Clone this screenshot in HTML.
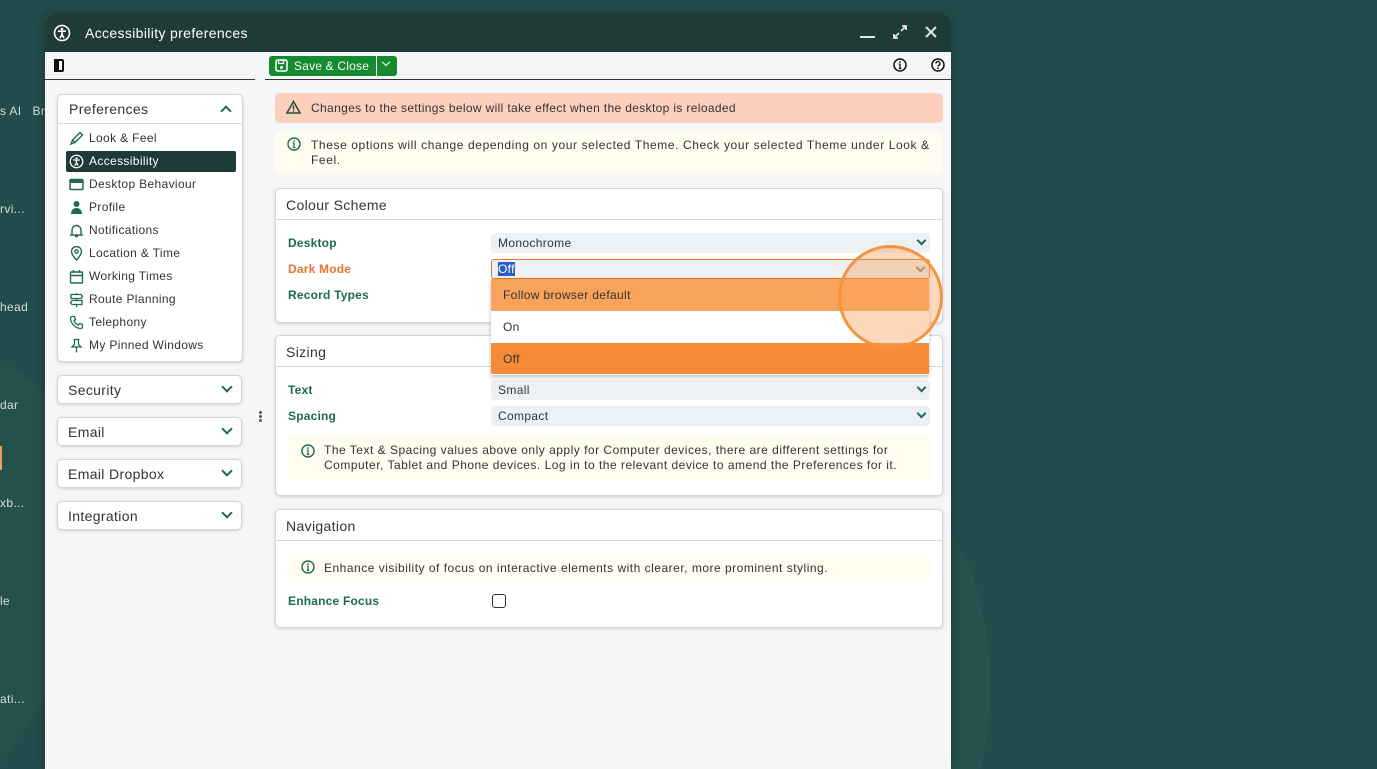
<!DOCTYPE html>
<html><head><meta charset="utf-8"><style>
*{box-sizing:border-box;margin:0;padding:0}
html,body{width:1377px;height:769px;overflow:hidden}
body{background:#224d4c;font-family:"Liberation Sans",sans-serif;position:relative;font-size:12px;color:#333;letter-spacing:.35px}
.a{position:absolute}
.bgt{position:absolute;color:#d6dedc;font-size:12px}
.win{position:absolute;left:45px;top:14px;width:906px;height:755px;background:#f5f6f8;border-radius:8px 8px 0 0;overflow:hidden;box-shadow:0 0 12px rgba(0,0,0,.3)}
.title{position:absolute;left:0;top:0;width:906px;height:38px;background:#1e3b35;color:#fff;font-size:14px}
.card{position:absolute;background:#fff;border:1px solid #d4d7da;border-radius:5px;box-shadow:0 1px 3px rgba(0,0,0,.15)}
.acc{position:absolute;left:12px;width:185px;height:29px;background:#fff;border:1px solid #d4d7da;border-radius:5px;box-shadow:0 1px 3px rgba(0,0,0,.15);font-size:14px;color:#333;padding:6px 10px}
.chev{position:absolute;right:10px;top:9px;width:8px;height:8px;border-right:2px solid #1e6b52;border-bottom:2px solid #1e6b52;transform:rotate(45deg)}
.mi{position:absolute;left:8px;width:170px;height:20px;font-size:12px;color:#333;padding:3px 0 0 23px}
.mi svg{position:absolute;left:3px;top:3px}
.lbl{position:absolute;font-weight:bold;color:#1d6a4f;font-size:12px;letter-spacing:.2px}
.sel{position:absolute;left:215px;width:439px;height:20px;background:#eef1f4;border-radius:3px;padding:3px 7px;font-size:12px;color:#333}
.sel .chev{top:4px;right:5px;width:7px;height:7px}
.ch{font-size:14px;color:#333;position:absolute;left:10px;top:8px}
.hl{position:absolute;left:0;right:0;height:1px;background:#d4d7da}
.info{position:absolute;left:12px;right:12px;background:#fefdf0;border-radius:4px;font-size:12px;color:#333}
</style></head><body>
<div class="a" style="left:0;top:0;width:1377px;height:769px;overflow:hidden">
<div class="a" style="left:-230px;top:360px;width:330px;height:420px;background:#27534f;transform:rotate(35deg);opacity:.7"></div>
<div class="a" style="left:790px;top:490px;width:200px;height:390px;border-radius:50%;background:#26524f"></div>
</div>
<div class="bgt" style="left:0;top:104px">s AI&nbsp;&nbsp;&nbsp;Br</div>
<div class="bgt" style="left:0;top:202px">rvi...</div>
<div class="bgt" style="left:0;top:300px">head</div>
<div class="bgt" style="left:0;top:398px">dar</div>
<div class="a" style="left:0;top:446px;width:2px;height:24px;background:#e8a25a"></div>
<div class="bgt" style="left:0;top:496px">xb...</div>
<div class="bgt" style="left:0;top:594px">le</div>
<div class="bgt" style="left:0;top:692px">ati...</div>

<div class="win">
 <div class="title">
  <svg class="a" style="left:8px;top:10px" width="18" height="18" viewBox="0 0 18 18"><circle cx="9" cy="9" r="7.5" fill="none" stroke="#fff" stroke-width="1.6"/><circle cx="9" cy="5" r="1.3" fill="#fff"/><path d="M5 7.2h8M9 7.5v3M9 10.5l-2 3.5M9 10.5l2 3.5" stroke="#fff" stroke-width="1.6" fill="none"/></svg>
  <div class="a" style="left:40px;top:11px">Accessibility preferences</div>
  <div class="a" style="left:815px;top:22px;width:15px;height:2px;background:#e0e6e4"></div>
  <svg class="a" style="left:846px;top:9px" width="18" height="18" viewBox="0 0 18 18"><path d="M10 8l5-5M11 3h4v4M8 10l-5 5M3 11v4h4" stroke="#e0e6e4" stroke-width="1.8" fill="none"/></svg>
  <svg class="a" style="left:879px;top:11px" width="14" height="14" viewBox="0 0 14 14"><path d="M2 2l10 10M12 2L2 12" stroke="#e0e6e4" stroke-width="2"/></svg>
 </div>
 <div class="a" style="left:9px;top:45px;width:10px;height:13px;border:2px solid #111;border-radius:2px"></div>
 <div class="a" style="left:9px;top:45px;width:5px;height:13px;background:#111"></div>
 <div class="a" style="left:0;top:65px;width:210px;height:1px;background:#333"></div>
 <div class="a" style="left:220px;top:65px;width:686px;height:1px;background:#333"></div>
 <div class="a" style="left:224px;top:42px;width:107px;height:20px;background:#158a2e;border-radius:3px 0 0 3px;color:#fff;font-size:12px;padding:3px 0 0 25px;letter-spacing:.2px">Save &amp; Close</div>
 <svg class="a" style="left:230px;top:45px" width="13" height="13" viewBox="0 0 13 13"><rect x="1" y="1" width="11" height="11" rx="1.5" fill="none" stroke="#fff" stroke-width="1.5"/><rect x="3.5" y="1" width="5" height="3.5" fill="none" stroke="#fff" stroke-width="1.2"/><circle cx="6.5" cy="8.5" r="1.5" fill="#fff"/></svg>
 <div class="a" style="left:332px;top:42px;width:20px;height:20px;background:#158a2e;border-radius:0 3px 3px 0"></div>
 <div class="a" style="left:338px;top:45px;width:6px;height:6px;border-right:1.5px solid #fff;border-bottom:1.5px solid #fff;transform:rotate(45deg)"></div>
 <svg class="a" style="left:848px;top:44px" width="14" height="14" viewBox="0 0 14 14"><circle cx="7" cy="7" r="6" fill="none" stroke="#111" stroke-width="1.5"/><path d="M7 6v4.5M5.8 6h1.2M5.8 10.5h2.6" stroke="#111" stroke-width="1.3"/><circle cx="7" cy="4" r=".9" fill="#111"/></svg>
 <svg class="a" style="left:886px;top:44px" width="14" height="14" viewBox="0 0 14 14"><circle cx="7" cy="7" r="6" fill="none" stroke="#111" stroke-width="1.5"/><path d="M5 5.5a2 2 0 1 1 2.6 1.9c-.5.2-.6.5-.6 1.2" stroke="#111" stroke-width="1.3" fill="none"/><circle cx="7" cy="10.3" r=".9" fill="#111"/></svg>

 <div class="card" style="left:12px;top:80px;width:186px;height:268px">
  <div class="ch" style="top:6px;left:11px">Preferences</div>
  <div class="a" style="right:12px;top:12px;width:8px;height:8px;border-left:2px solid #1e6b52;border-top:2px solid #1e6b52;transform:rotate(45deg)"></div>
  <div class="hl" style="top:28px"></div>
  <div class="mi" style="top:33px"><svg width="15" height="15" viewBox="0 0 15 15"><path d="M2 13l1.5-4L11 1.5l2.5 2.5L6 11.5z M3.5 9l2.5 2.5" fill="none" stroke="#1e6b52" stroke-width="1.4"/></svg>Look &amp; Feel</div>
  <div class="mi" style="top:56px;background:#1e3b35;color:#fff;border-radius:2px;height:21px"><svg width="15" height="15" viewBox="0 0 18 18"><circle cx="9" cy="9" r="7.5" fill="none" stroke="#fff" stroke-width="1.6"/><circle cx="9" cy="5" r="1.3" fill="#fff"/><path d="M5 7.2h8M9 7.5v3M9 10.5l-2 3.5M9 10.5l2 3.5" stroke="#fff" stroke-width="1.6" fill="none"/></svg>Accessibility</div>
  <div class="mi" style="top:79px"><svg width="15" height="15" viewBox="0 0 15 15"><rect x="1" y="2.5" width="13" height="10" rx="1" fill="none" stroke="#1e6b52" stroke-width="1.5"/><rect x="1" y="2.5" width="13" height="3.5" fill="#1e6b52"/></svg>Desktop Behaviour</div>
  <div class="mi" style="top:102px"><svg width="15" height="15" viewBox="0 0 15 15"><circle cx="7.5" cy="4" r="3" fill="#1e6b52"/><path d="M2 14c0-4 2.5-6 5.5-6s5.5 2 5.5 6z" fill="#1e6b52"/></svg>Profile</div>
  <div class="mi" style="top:125px"><svg width="15" height="15" viewBox="0 0 15 15"><path d="M3 11V7a4.5 4.5 0 0 1 9 0v4l1 1H2zM6 13.5h3" fill="none" stroke="#1e6b52" stroke-width="1.4"/></svg>Notifications</div>
  <div class="mi" style="top:148px"><svg width="15" height="15" viewBox="0 0 15 15"><path d="M7.5 14s-5-5-5-8.5a5 5 0 0 1 10 0C12.5 9 7.5 14 7.5 14z" fill="none" stroke="#1e6b52" stroke-width="1.4"/><circle cx="7.5" cy="5.5" r="1.7" fill="none" stroke="#1e6b52" stroke-width="1.3"/></svg>Location &amp; Time</div>
  <div class="mi" style="top:171px"><svg width="15" height="15" viewBox="0 0 15 15"><rect x="1.5" y="3" width="12" height="11" rx="1" fill="none" stroke="#1e6b52" stroke-width="1.4"/><path d="M1.5 6.5h12M4.5 1v3M10.5 1v3" stroke="#1e6b52" stroke-width="1.4"/></svg>Working Times</div>
  <div class="mi" style="top:194px"><svg width="15" height="15" viewBox="0 0 15 15"><path d="M2 2.5h10l1.5 2-1.5 2H2zM3 8.5h10v4H3l-1.5-2zM7.5 1v1.5M7.5 6.5v2M7.5 12.5V15" fill="none" stroke="#1e6b52" stroke-width="1.3"/></svg>Route Planning</div>
  <div class="mi" style="top:217px"><svg width="15" height="15" viewBox="0 0 15 15"><path d="M3 1.5l2.5 0 1 3-1.5 1.2a8 8 0 0 0 4.3 4.3l1.2-1.5 3 1v2.5c0 .8-.7 1.5-1.5 1.5C6.5 13.5 1.5 8.5 1.5 3c0-.8.7-1.5 1.5-1.5z" fill="none" stroke="#1e6b52" stroke-width="1.3"/></svg>Telephony</div>
  <div class="mi" style="top:240px"><svg width="15" height="15" viewBox="0 0 15 15"><path d="M4.5 1.5h6M5.5 1.5v5L3 9h9L9.5 6.5v-5M7.5 9v5.5" fill="none" stroke="#1e6b52" stroke-width="1.3"/></svg>My Pinned Windows</div>
 </div>
 <div class="acc" style="top:361px">Security<div class="chev" style="top:7px"></div></div>
 <div class="acc" style="top:403px">Email<div class="chev" style="top:7px"></div></div>
 <div class="acc" style="top:445px">Email Dropbox<div class="chev" style="top:7px"></div></div>
 <div class="acc" style="top:487px">Integration<div class="chev" style="top:7px"></div></div>
 <div class="a" style="left:214px;top:397px;width:3px;height:3px;background:#555;border-radius:50%;box-shadow:0 4px 0 #555,0 8px 0 #555"></div>

 <div class="a" style="left:230px;top:79px;width:668px;height:30px;background:#fdd0bd;border-radius:5px;font-size:12px;padding:8px 0 0 36px">Changes to the settings below will take effect when the desktop is reloaded</div>
 <svg class="a" style="left:241px;top:86px" width="15" height="14" viewBox="0 0 15 14"><path d="M7.5 1.5L14 13H1z" fill="none" stroke="#1e4d3c" stroke-width="1.5"/><path d="M7.5 5.5v4" stroke="#1e4d3c" stroke-width="1.4"/><circle cx="7.5" cy="11" r=".8" fill="#1e4d3c"/></svg>
 <div class="a" style="left:230px;top:117px;width:668px;height:44px;background:#fefdf0;border-radius:5px;font-size:12px;padding:7px 12px 0 36px;line-height:15px;letter-spacing:.6px">These options will change depending on your selected Theme. Check your selected Theme under Look &amp; Feel.</div>
 <svg class="a" style="left:242px;top:123px" width="14" height="14" viewBox="0 0 14 14"><circle cx="7" cy="7" r="6" fill="none" stroke="#1e6b52" stroke-width="1.4"/><path d="M7 6v4.5M5.8 6h1.2M5.8 10.5h2.6" stroke="#1e6b52" stroke-width="1.3"/><circle cx="7" cy="4" r=".9" fill="#1e6b52"/></svg>

 <div class="card" style="left:230px;top:174px;width:668px;height:135px">
  <div class="ch">Colour Scheme</div><div class="hl" style="top:30px"></div>
  <div class="lbl" style="left:12px;top:47px">Desktop</div>
  <div class="lbl" style="left:12px;top:73px;color:#e8772e">Dark Mode</div>
  <div class="lbl" style="left:12px;top:99px">Record Types</div>
  <div class="sel" style="top:44px">Monochrome<div class="chev"></div></div>
  <div class="sel" style="top:70px;border:1px solid #e8772e;background:#eef1f4;padding:2px 6px"><span style="background:#2b5cc2;color:#fff">Off</span><div class="chev" style="border-color:#7a8a6a"></div></div>
 </div>
 <div class="card" style="left:230px;top:321px;width:668px;height:161px">
  <div class="ch">Sizing</div><div class="hl" style="top:30px"></div>
  <div class="lbl" style="left:12px;top:47px">Text</div>
  <div class="lbl" style="left:12px;top:73px">Spacing</div>
  <div class="sel" style="top:44px">Small<div class="chev"></div></div>
  <div class="sel" style="top:70px">Compact<div class="chev"></div></div>
  <div class="info" style="top:99px;height:46px;padding:8px 10px 0 36px;line-height:15px;letter-spacing:.5px">The Text &amp; Spacing values above only apply for Computer devices, there are different settings for Computer, Tablet and Phone devices. Log in to the relevant device to amend the Preferences for it.</div>
  <svg class="a" style="left:25px;top:108px" width="14" height="14" viewBox="0 0 14 14"><circle cx="7" cy="7" r="6" fill="none" stroke="#1e6b52" stroke-width="1.4"/><path d="M7 6v4.5M5.8 6h1.2M5.8 10.5h2.6" stroke="#1e6b52" stroke-width="1.3"/><circle cx="7" cy="4" r=".9" fill="#1e6b52"/></svg>
 </div>
 <div class="card" style="left:230px;top:495px;width:668px;height:119px">
  <div class="ch">Navigation</div><div class="hl" style="top:30px"></div>
  <div class="info" style="top:43px;height:30px;padding:8px 0 0 36px;letter-spacing:.5px">Enhance visibility of focus on interactive elements with clearer, more prominent styling.</div>
  <svg class="a" style="left:25px;top:50px" width="14" height="14" viewBox="0 0 14 14"><circle cx="7" cy="7" r="6" fill="none" stroke="#1e6b52" stroke-width="1.4"/><path d="M7 6v4.5M5.8 6h1.2M5.8 10.5h2.6" stroke="#1e6b52" stroke-width="1.3"/><circle cx="7" cy="4" r=".9" fill="#1e6b52"/></svg>
  <div class="lbl" style="left:12px;top:84px">Enhance Focus</div>
  <div class="a" style="left:216px;top:84px;width:14px;height:14px;border:1.5px solid #333;border-radius:3px"></div>
 </div>

 <div class="a" style="left:446px;top:265px;width:438px;height:96px;box-shadow:0 2px 4px rgba(0,0,0,.25);background:#fff;font-size:12px">
  <div style="height:32px;background:#f8a35c;padding:9px 12px">Follow browser default</div>
  <div style="height:32px;background:#fff;padding:9px 12px">On</div>
  <div style="height:31px;background:#f58b36;padding:9px 12px">Off</div>
 </div>
 <div class="a" style="left:793px;top:231px;width:105px;height:104px;border-radius:50%;border:3px solid #f5933f;background:rgba(248,160,90,.4)"></div>
</div>
</body></html>
